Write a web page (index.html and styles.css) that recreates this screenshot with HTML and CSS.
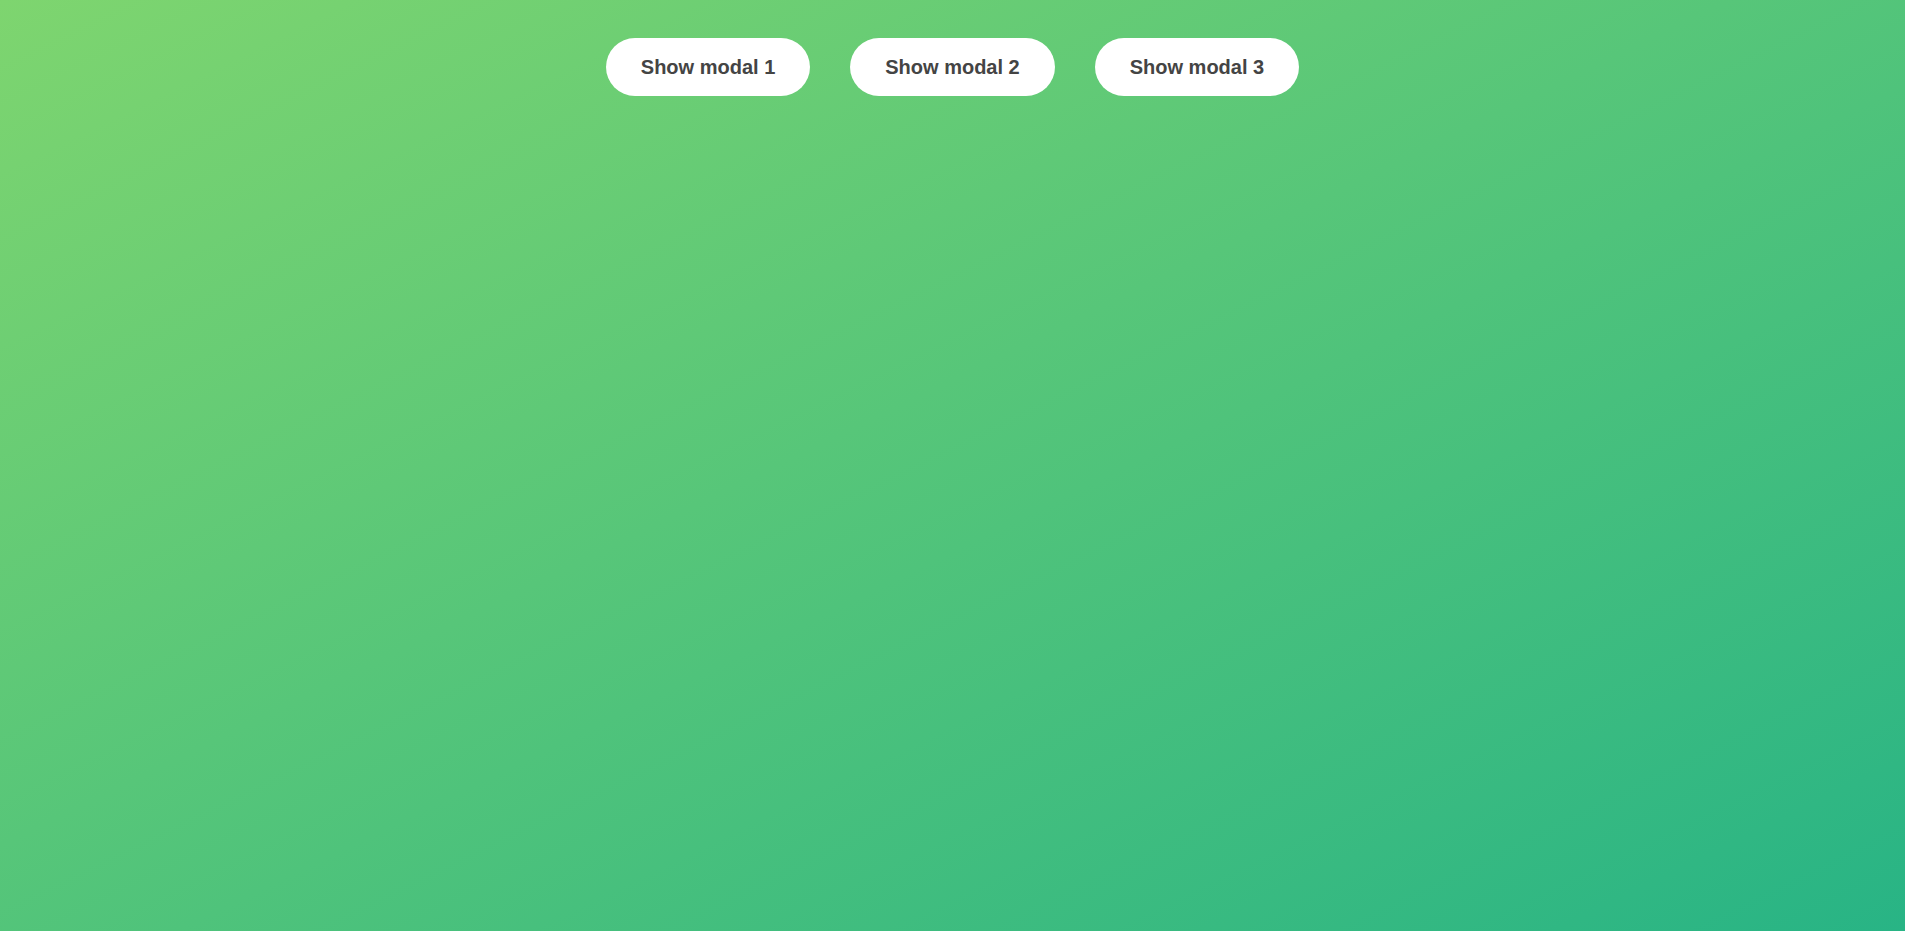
FILE: index.html
```html
<!DOCTYPE html>
<html lang="en">
<head>
<meta charset="utf-8">
<title>Modals</title>
<link rel="stylesheet" href="styles.css">
</head>
<body>
<main class="page">
  <div class="actions">
    <button class="btn" type="button">Show modal 1</button>
    <button class="btn" type="button">Show modal 2</button>
    <button class="btn" type="button">Show modal 3</button>
  </div>
</main>
</body>
</html>
```
FILE: styles.css
```css
* { box-sizing: border-box; }
html, body { margin: 0; padding: 0; height: 100%; }
body {
  font-family: "Liberation Sans", Arial, sans-serif;
  background: linear-gradient(to right bottom, #7ed56f, #28b485);
  min-height: 100vh;
}
.page {
  min-height: 100vh;
  padding-top: 38px;
}
.actions {
  display: flex;
  justify-content: center;
  gap: 40px;
}
.btn {
  font-family: "Liberation Sans", Arial, sans-serif;
  font-size: 20px;
  font-weight: 700;
  color: #444;
  background: #fff;
  border: none;
  border-radius: 100px;
  height: 58px;
  padding: 0 35px;
  cursor: pointer;
}
```
